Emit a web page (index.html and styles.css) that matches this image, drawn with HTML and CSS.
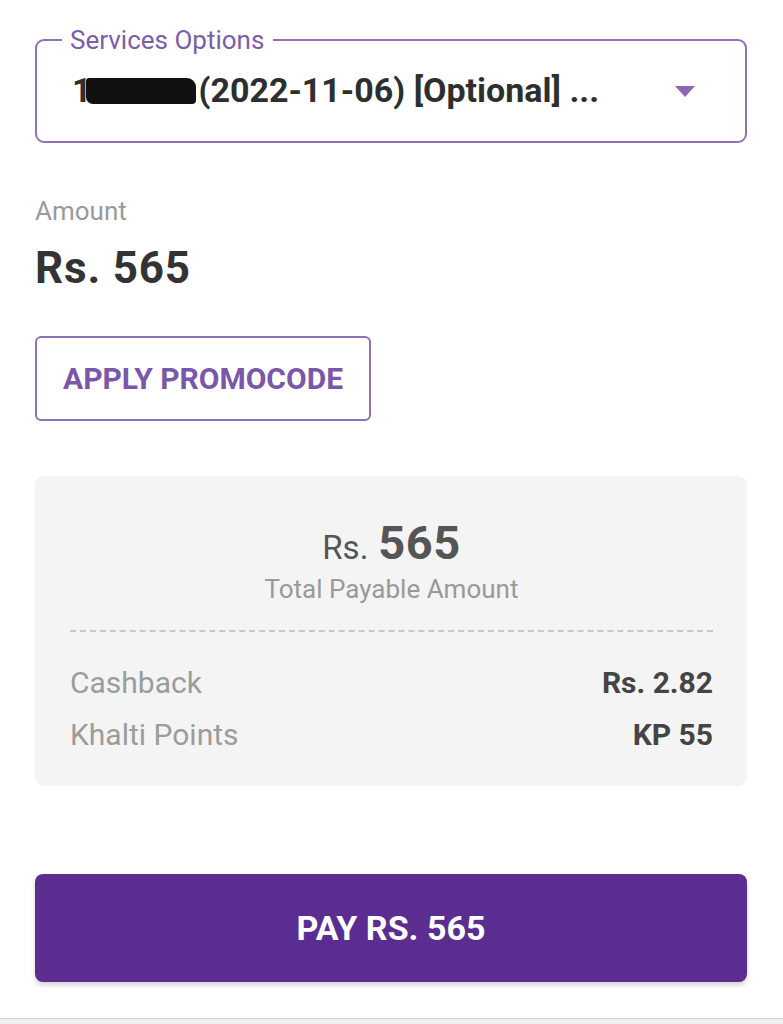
FILE: index.html
```html
<!DOCTYPE html>
<html>
<head>
<meta charset="utf-8">
<link rel="stylesheet" href="styles.css">
</head>
<body>
<div class="page">
  <fieldset class="select">
    <legend class="select-label">Services Options</legend>
    <div class="select-row">
      <div class="select-value">1<span class="redact"></span>(2022-11-06) [Optional] ...</div>
      <svg class="caret" width="20" height="11" viewBox="0 0 20 11"><polygon points="0,0 20,0 10,11" fill="#8a68b5"/></svg>
    </div>
  </fieldset>

  <div class="amount">
    <div class="amount-label">Amount</div>
    <div class="amount-value">Rs. 565</div>
  </div>

  <button class="promo">APPLY PROMOCODE</button>

  <div class="summary">
    <div class="total">
      <div class="total-value"><span class="cur">Rs.</span> <span class="num">565</span></div>
      <div class="total-label">Total Payable Amount</div>
    </div>
    <div class="dash"></div>
    <div class="rows">
      <div class="row"><span class="row-label">Cashback</span><span class="row-value">Rs. 2.82</span></div>
      <div class="row"><span class="row-label">Khalti Points</span><span class="row-value">KP 55</span></div>
    </div>
  </div>

  <button class="pay">PAY RS. 565</button>
</div>
<div class="bottom-bar"></div>
</body>
</html>
```

FILE: styles.css
```css
* { box-sizing: border-box; }
html, body { margin: 0; padding: 0; background: #fff; }
body {
  font-family: Roboto, "Noto Sans", sans-serif;
  width: 783px;
  height: 1024px;
  position: relative;
  overflow: hidden;
}
.page {
  padding: 26px 36px 0 35px;
  display: flex;
  flex-direction: column;
}
.select {
  margin: 0;
  border: 2px solid #8e72b3;
  border-radius: 9px;
  padding: 0 50px 0 35px;
  height: 117px;
}
.select-label {
  color: #7c5da8;
  font-size: 26px;
  padding: 0 9px 0 8px;
  margin-left: -10px;
  line-height: 28px;
}
.select-row {
  display: flex;
  align-items: center;
  justify-content: space-between;
  margin-top: 16px;
  height: 40px;
}
.select-value {
  font-size: 34px;
  font-weight: 700;
  color: #2e2e2e;
  line-height: 40px;
  display: flex;
  align-items: center;
  white-space: nowrap;
}
.redact {
  display: inline-block;
  width: 110px;
  height: 26px;
  background: #111;
  border-radius: 3px 9px 4px 7px;
  margin: 2px 3px 0 -6px;
}
.caret { margin-top: 2px; }

.amount { margin-top: 53px; }
.amount-label { color: #9a9a9a; font-size: 26px; line-height: 30px; }
.amount-value {
  font-size: 44px; font-weight: 700; color: #333;
  margin-top: 17px; line-height: 50px; letter-spacing: 0.8px;
}

.promo {
  margin-top: 43px;
  align-self: flex-start;
  width: 336px;
  height: 85px;
  background: #fff;
  border: 2px solid #8e72b3;
  border-radius: 6px;
  color: #7a57a8;
  font-family: Roboto, sans-serif;
  font-weight: 700;
  font-size: 30px;
  padding: 0;
}

.summary {
  margin-top: 55px;
  background: #f4f4f4;
  border-radius: 9px;
  padding: 41px 34px 33px 35px;
}
.total { text-align: center; }
.total-value { color: #555; line-height: 52px; height: 52px; }
.cur { font-size: 33px; }
.num { font-size: 47px; font-weight: 700; letter-spacing: 0.5px; margin-left: 6px; }
.total-label { color: #999; font-size: 26px; margin-top: 5px; line-height: 30px; }
.dash {
  margin-top: 26px;
  border-top: 2px dashed #c8c8c8;
}
.rows { margin-top: 33px; display: flex; flex-direction: column; gap: 16px; }
.row { display: flex; justify-content: space-between; align-items: center; line-height: 36px; height: 36px; }
.row-label { color: #9c9c9c; font-size: 30px; }
.row-value { color: #444; font-size: 30px; font-weight: 700; }

.pay {
  margin-top: 88px;
  height: 108px;
  background: #5c2d91;
  border: none;
  border-radius: 8px;
  color: #fff;
  font-family: Roboto, sans-serif;
  font-size: 34px;
  font-weight: 700;
  box-shadow: 0 3px 5px rgba(0,0,0,0.18);
}

.bottom-bar {
  position: absolute;
  left: 0; right: 0; bottom: 0;
  height: 6px;
  background: #efefef;
  border-top: 1px solid #d6d6d6;
}
```
